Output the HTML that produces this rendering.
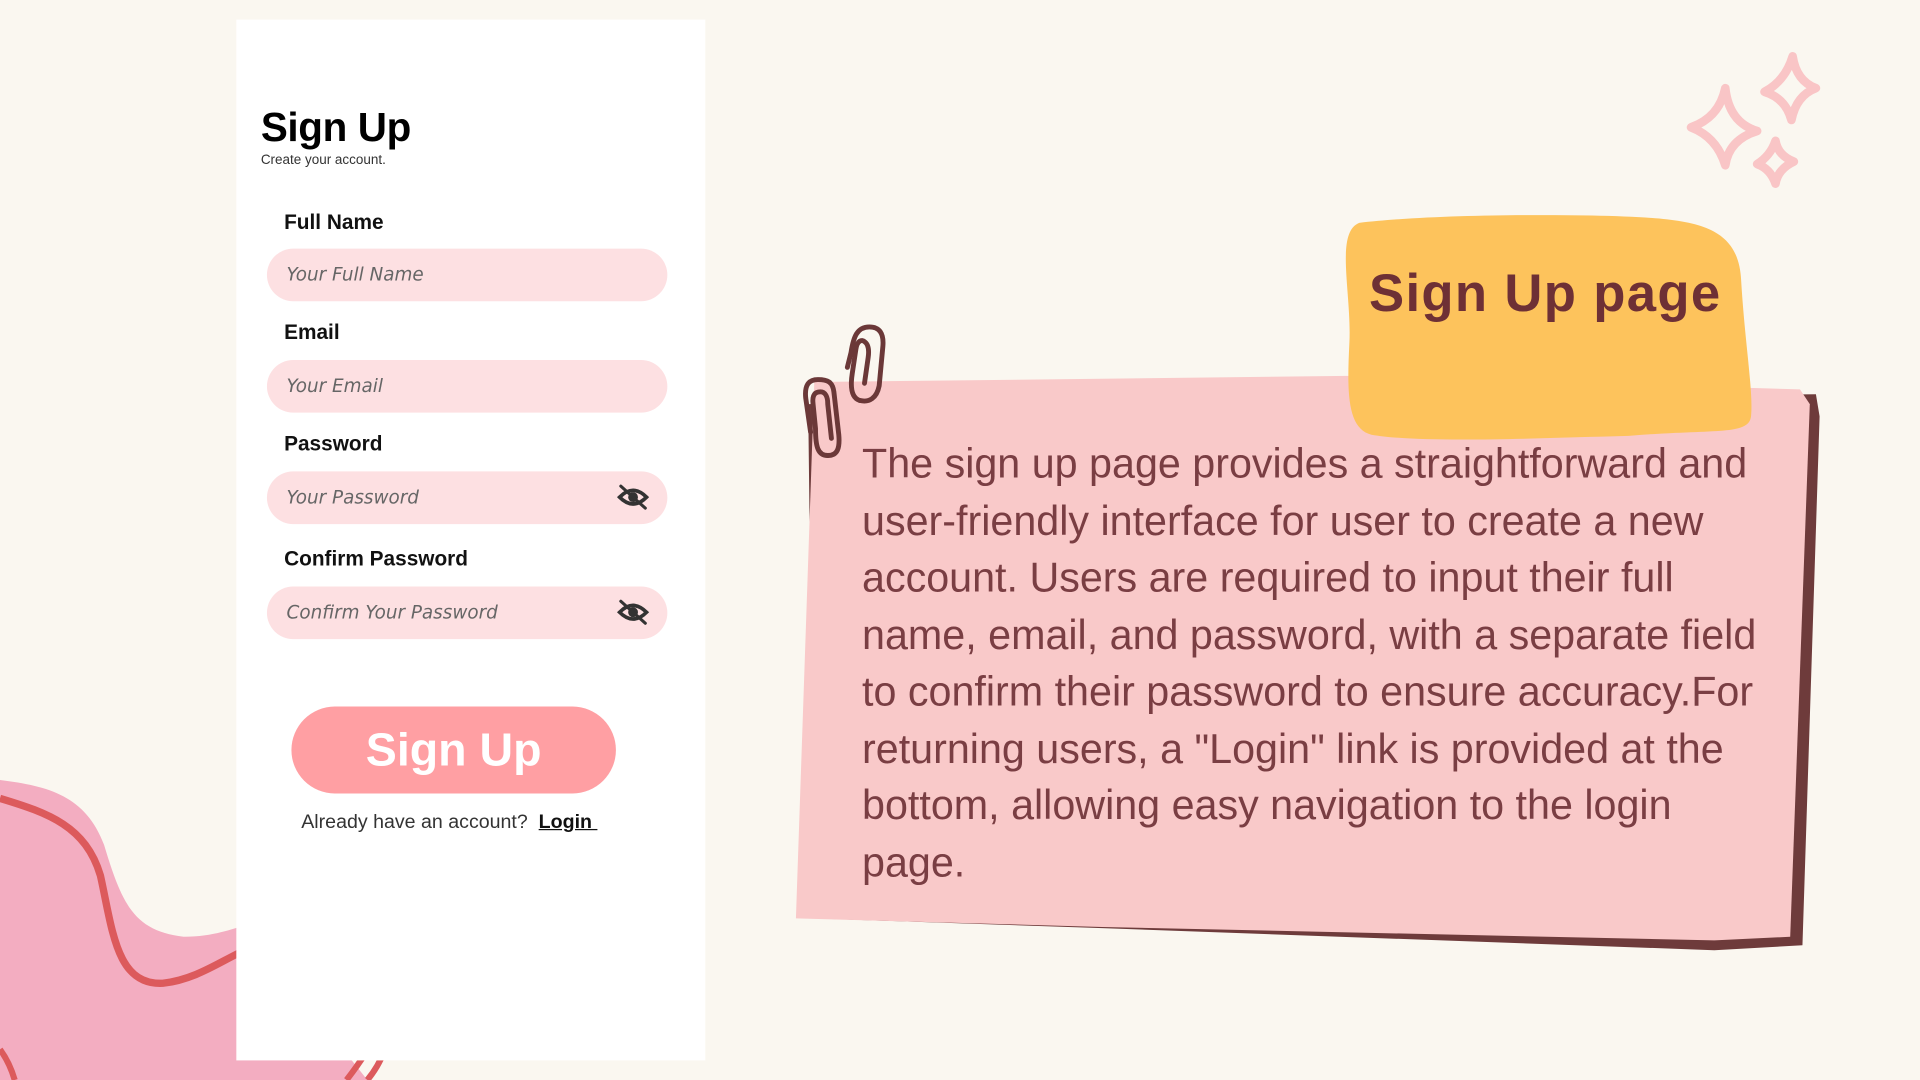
<!DOCTYPE html>
<html><head><meta charset="utf-8"><style>
html,body{margin:0;padding:0;width:1920px;height:1080px;overflow:hidden;background:#faf7f0}
#s{position:absolute;left:0;top:0;width:1568px;height:882px;transform:scale(1.22449);transform-origin:0 0;font-family:"Liberation Sans",sans-serif}
.a{position:absolute}
.card{left:193px;top:16px;width:383px;height:850px;background:#fff}
.lbl{font-weight:bold;font-size:17px;color:#111;left:232px}
.inp{left:218px;width:327px;height:43px;border-radius:22px;background:#fde0e2}
.ph{position:absolute;left:16px;top:12px;font-style:italic;color:#666;font-family:"DejaVu Sans","Liberation Sans",sans-serif;font-size:15px}
.eye{position:absolute;right:14px;top:10px}
.txt{left:704px;top:356px;width:738px;font-size:33.7px;line-height:46.5px;color:#7a3e43}
</style></head><body><div id="s">
<svg class="a" style="left:0;top:0" width="1568" height="882" viewBox="0 0 1568 882">
<path d="M0 637 C40 642 70 650 85 690 C100 740 110 760 150 765 C175 765 190 758 200 756 L300 882 L0 882Z" fill="#f3adc1"/>
<path d="M0 652 C40 664 70 675 82 715 C92 760 95 805 133 803 C160 800 180 785 200 776" fill="none" stroke="#dc5a5c" stroke-width="6"/>
<path d="M0 857 Q8 868 12 882" fill="none" stroke="#dc5a5c" stroke-width="5"/>
<path d="M283 882 Q300 860 310 840 M300 882 Q310 870 315 855" fill="none" stroke="#dc5a5c" stroke-width="5"/>
<path d="M660 330 L1483 322 L1486 340 L1472 772 L1400 776 L900 758 L665 750Z" fill="#6e3b3b"/>
<path d="M665 312 L1100 307 L1470 318 L1478 330 L1462 765 L1400 768 L900 757 L650 750 Z" fill="#f9c9c9"/>
<path d="M1110 182 C1160 176 1240 175 1300 176 C1380 178 1420 180 1422 230 C1425 280 1432 320 1430 340 C1428 356 1400 350 1330 356 C1250 358 1160 362 1120 355 C1100 350 1100 320 1102 280 C1104 240 1090 190 1110 182Z" fill="#fdc35c"/>
<g fill="none" stroke="#6b3838" stroke-width="4" stroke-linecap="round">
<path d="M676 372 C668 372 666 365 666 350 L664 330 C663 322 666 320 670 320 C674 320 676 324 676 330 L679 358"/>
<path d="M676 372 C684 372 686 366 685 355 L681 320 C680 312 676 310 668 310 C660 310 657 315 658 325 L662 353"/>
<path d="M702 327 C696 325 694 318 696 305 L699 285 C700 278 704 277 706 279 C709 281 710 285 709 292 L706 313"/>
<path d="M702 327 C710 329 716 325 718 315 L721 283 C722 272 718 267 710 267 C700 267 697 275 695 288 L692 300"/>
</g>
<g fill="none" stroke="#f9c5c6" stroke-width="7" stroke-linejoin="round">
<path d="M1409 72 Q1412 100 1435 107 Q1412 114 1409 135 Q1402 112 1381 104 Q1404 96 1409 72Z"/>
<path d="M1464 46 Q1467 66 1483 72 Q1467 78 1463 98 Q1458 80 1441 75 Q1458 66 1464 46Z"/>
<path d="M1450 115 Q1452 127 1465 132 Q1452 138 1450 150 Q1446 138 1435 134 Q1446 127 1450 115Z"/>
</g>
</svg>
<div class="a card"></div>
<div class="a" style="left:213px;top:85px;font-size:33px;font-weight:bold;color:#000;letter-spacing:-0.3px">Sign Up</div>
<div class="a" style="left:213px;top:125px;font-size:11px;color:#333">Create your account.</div>
<div class="a lbl" style="top:172px">Full Name</div>
<div class="a inp" style="top:203px"><span class="ph">Your Full Name</span></div>
<div class="a lbl" style="top:262px">Email</div>
<div class="a inp" style="top:294px"><span class="ph">Your Email</span></div>
<div class="a lbl" style="top:353px">Password</div>
<div class="a inp" style="top:385px"><span class="ph">Your Password</span>
<svg class="eye" width="28" height="22" viewBox="0 0 28 22"><path d="M3 11 Q14 0 25 11 Q14 22 3 11Z" fill="none" stroke="#333" stroke-width="3"/><circle cx="14" cy="11" r="4" fill="#333"/><path d="M4 2 L24 20" stroke="#333" stroke-width="2.5" stroke-linecap="round"/></svg></div>
<div class="a lbl" style="top:447px">Confirm Password</div>
<div class="a inp" style="top:479px"><span class="ph">Confirm Your Password</span>
<svg class="eye" width="28" height="22" viewBox="0 0 28 22"><path d="M3 11 Q14 0 25 11 Q14 22 3 11Z" fill="none" stroke="#333" stroke-width="3"/><circle cx="14" cy="11" r="4" fill="#333"/><path d="M4 2 L24 20" stroke="#333" stroke-width="2.5" stroke-linecap="round"/></svg></div>
<div class="a" style="left:238px;top:577px;width:265px;height:71px;border-radius:36px;background:#ff9fa3;color:#fff;font-weight:bold;font-size:38px;line-height:73px;text-align:center">Sign Up</div>
<div class="a" style="left:246px;top:663px;font-size:16px;color:#333">Already have an account?&nbsp; <b style="color:#111;text-decoration:underline">Login&nbsp;</b></div>
<div class="a" style="left:1118px;top:216px;font-size:43px;font-weight:bold;color:#6e3035;letter-spacing:1.1px">Sign Up page</div>
<div class="a txt">The sign up page provides a straightforward and user-friendly interface for user to create a new account. Users are required to input their full name, email, and password, with a separate field to confirm their password to ensure accuracy.For returning users, a "Login" link is provided at the bottom, allowing easy navigation to the login page.</div>
</div></body></html>
